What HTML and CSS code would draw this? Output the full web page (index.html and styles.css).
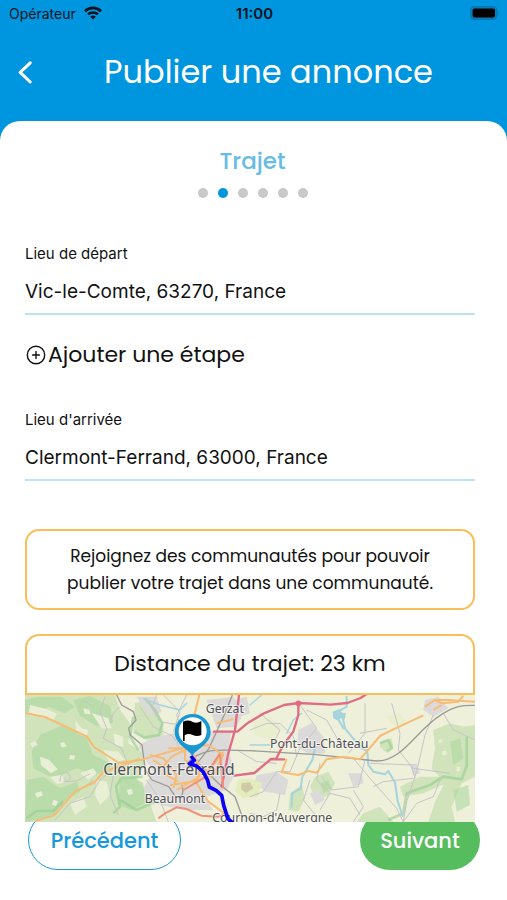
FILE: index.html
```html
<!DOCTYPE html>
<html lang="fr">
<head>
<meta charset="utf-8">
<meta name="viewport" content="width=device-width, initial-scale=1">
<title>Publier une annonce</title>
<link rel="stylesheet" href="styles.css">
</head>
<body>
<header class="top">
  <div class="status">
    <div class="carrier">
      <span>Opérateur</span>
      <svg class="wifi" viewBox="0 0 18 14" aria-hidden="true">
        <path d="M1 5.2a11.5 11.5 0 0 1 16 0" fill="none" stroke="#06121c" stroke-width="2.7"/>
        <path d="M4 8.4a7.2 7.2 0 0 1 10 0" fill="none" stroke="#06121c" stroke-width="2.5"/>
        <path d="M9 13.6 6.2 10.8a4 4 0 0 1 5.6 0Z" fill="#06121c"/>
      </svg>
    </div>
    <span class="clock">11:00</span>
    <svg class="battery" viewBox="0 0 30 14" aria-hidden="true">
      <rect x=".8" y=".8" width="26" height="12.4" rx="3.6" fill="#0580bd" stroke="#0877ae" stroke-width="1.4"/>
      <rect x="2.6" y="2.6" width="22.4" height="9" rx="2" fill="#000"/>
      <path d="M28.2 4.8q1.6 2.2 0 4.4Z" fill="#0877ae"/>
    </svg>
  </div>
  <div class="titlebar">
    <button class="back" type="button" aria-label="Retour">
      <svg viewBox="0 0 16 24" aria-hidden="true"><path d="M13.2 2.8 3.2 12.4 13.2 22" fill="none" stroke="#fff" stroke-width="3" stroke-linecap="round" stroke-linejoin="round"/></svg>
    </button>
    <h1>Publier une annonce</h1>
  </div>
</header>
<main class="sheet">
  <h2>Trajet</h2>
  <ol class="steps" aria-label="Étapes">
    <li></li><li class="current"></li><li></li><li></li><li></li><li></li>
  </ol>
  <form class="form">
    <div class="field">
      <label for="from">Lieu de départ</label>
      <input id="from" type="text" value="Vic-le-Comte, 63270, France">
    </div>
    <button class="add" type="button">
      <svg viewBox="0 0 20 20" aria-hidden="true"><circle cx="10" cy="10" r="8.7"/><path d="M10 6.5v7M6.500 10h7"/></svg>
      <span>Ajouter une étape</span>
    </button>
    <div class="field">
      <label for="to">Lieu d'arrivée</label>
      <input id="to" type="text" value="Clermont-Ferrand, 63000, France">
    </div>
    <p class="notice">Rejoignez des communautés pour pouvoir publier votre trajet dans une communauté.</p>
    <section class="route">
      <p class="distance">Distance du trajet: 23 km</p>
      <svg class="map" viewBox="15 45 1350 381" preserveAspectRatio="xMidYMid slice" role="img" aria-label="Carte du trajet">
        <rect x="15" y="45" width="1350" height="381" fill="#eef0da"/>
        <!-- woodland west of the city -->
        <g fill="#d0e3ba">
          <path d="M15 45H285L300 90 330 130 325 190 365 215 375 250 350 300 380 330 400 400 410 426H15Z"/>
          <path d="M345 70l40-10 45 70 0 40-50 10-40-30z"/>
          <path d="M1240 150l50-20 40 10 35-5V290l-40 20-30 70 10 46h-80l20-60 30-60-40-40 10-60z"/>
          <path d="M885 290l40-15 20 35-20 40-40 0-15-30zM1080 185l35-10 5 30-25 10-15-15zM810 340l35-25 10 40-20 40-30-5z"/>
          <path d="M1030 400l50-20 40 46H1010zM1140 320l60-30 60 0 40-30 0 40-90 40-60 10z"/>
        </g>
        <g fill="#add8a2" opacity=".6">
          <path d="M15 60l40-10 70 0 40 30-30 20-50-20-40 20-30-5z"/>
          <path d="M60 165l70-30 70 40 20 50 60 30-50 30-60-20-70 30-60-30-5-50z"/>
          <path d="M20 300l50-10 50 35 50-20 10 30-50 30-30 45-85 16z"/>
          <path d="M160 60l50-12 60 30 10 50-50 10-50-30z"/>
          <path d="M300 300l40-10 30 20 5 60-40 20-40-15z"/>
          <path d="M900 310l25-10 10 25-25 15zM1290 185l30-10 10 60-30 20zM1300 330l45-15 5 60-40 20z"/>
        </g>
        <g fill="#e9efd5">
          <path d="M30 75l50 12 30 15-10 18-45-10-30-5zM215 100l50 15 10 30-30 0zM60 230l28 10 25 28-20 12-30-25zM230 300l30 5 10 40-30 30-15-30zM150 370l40-20 10 30-35 25zM280 160l30 10 0 30-25-5zM250 210l45 5 20 25-45 10z"/>
          <path d="M90 290l35-5 15 20-30 8zM165 120l20 25 20 5-5 20-30-10zM180 280l40-15 10 15-25 20z"/>
          <path d="M120 190l12-4 8 12-14 6zM150 225l16 2-4 12-14-2zM45 340l18-6 6 12-18 8zM100 360l14 4-6 14-12-4zM190 85l18 4 4 14-18-2zM30 190l14-6 10 10-16 8zM320 330l14-4 6 14-14 6zM1265 215l12-4 4 12-12 4zM1310 260l10 0 0 12-10 2zM1255 180l10-3 3 10-10 2z"/>
        </g>
        <!-- built-up areas -->
        <g fill="#dcdad9">
          <path d="M350 50l60 0 15 45-30 15-25-25zM405 170l60-10 60 20 60-30 50 0-10 60 20 70-25 50-60 20-30 30-70-20-60 5-30-40 30-50-20-30-25-50zM560 60l80-10 30 50-20 40-60 5zM380 350l60-10 110 10 30 40-90 0-90-20z"/>
          <path d="M835 150l40-20 35 40 5 50-50 0-35-20zM710 285l60-10 35 25-10 45-60-10-30-30zM1215 60l40-10 30 35-45 25-30-20zM985 280l40 0 5 30-30 10zM870 340l30-10 15 30-30 15zM640 60l40-10 10 50-30 10zM1170 255l20-5 10 30-20 5z"/>
        </g>
        <g fill="#e4ebbd"><path d="M655 300l35-5 35 15-10 40-45 5-25-20z"/><path d="M700 125l50-15 35 30-30 40-50-15zM1100 110l40-10 20 30-30 20z" opacity=".5"/></g>
        <path d="M665 310l25-3 10 18-22 14-15-12z" fill="#cfc9a5"/>
        <!-- wood outlines -->
        <g fill="none" stroke="#94cd91" stroke-width="8" opacity=".6" stroke-linejoin="round">
          <path d="M375 55l30 35 22 40-10 35-45 8-30-18M280 400l20-20-12-60 15-25 65-5M300 360l50 30 45-20 35-10M340 110l-10 60 25 40M20 415l30-22 50 0 30-30"/>
          <path d="M1105 420l45-20 10-60 70-25 40-25 55 8 15-40V170M1080 190l25-10 10 25-15 10"/>
        </g>
        <!-- minor roads -->
        <g fill="none" stroke="#c6c4c8" stroke-width="3" stroke-linejoin="round">
          <path d="M105 420l45-50 60-20 30-50 35-30M255 50l-15 45 20 50-10 30 55 30 20 50-45 30-10 60 25 60M410 45l-15 40 25 40 60 10 30-30M360 80l40 60 60 30 30 50M430 45l50 50-20 60M500 45l-30 60 15 40M380 300l40 60 25 66M270 130l10-30 20-20M120 305c0-35 30-35 30-12 0 15-20 12-18 0M130 305l40-2 40-22M180 330l40-30M190 60l30 20"/>
          <path d="M690 150l50-20 40 0 40 40 10 60M720 100l60 50-30 60M840 75l50 70-50 60-30 70-40 0-40 60-40 15M860 90l60 30 40 70 80 20M1035 70v90l-50 60M1115 70l25 90-5 50 40 50 10 35M1240 105l-25 60-25 110-30 90-10 61M1035 240l-20 80-80 10-30-40M1000 235l50 60 80 90 20 41M1020 160l80-15M1060 320l30-15 90-10M870 300l-20 60 40 50M1180 265l110 15M1260 300l-20 50-50 20-40 56M1270 100l30 50 65 30M930 340l60 15 30 50M1050 250l130 5M650 210l60 35 60 5M780 340l-10 50-40 20M900 250l-10 50 40 40-30 50M1000 330l30 50-30 46M690 400l60 15"/>
        </g>
        <!-- rivers -->
        <g fill="none" stroke="#a5d3de" stroke-width="6" stroke-linejoin="round" stroke-linecap="round">
          <path d="M965 100l10 45 20 25 22 25 25 20 3 40 15 20 35 8 10-10 20 35 8 55 15 45"/>
          <path d="M945 100l35-20 0-30M945 100l25 45M885 205l-8 35-30 50-5 35-25 15-3 40"/>
          <path d="M370 55l50 20 60 15 20-20M690 75l35-30M690 195h60M800 160l20-40 25-20" stroke-width="4"/>
        </g>
        <path d="M938 95l20-8 8 12 12 0-4 20-12-4-6 8-16-8z" fill="#a5d3de"/>
        <!-- railways -->
        <g fill="none" stroke="#9c9a96" stroke-width="4" stroke-linejoin="round">
          <path d="M290 45l15 30 35 20 8 25-22 25 5 20 35 30 10 75 20 30 50 20 20 30q30 8 20-35"/>
          <path d="M637 45l-20 50-50 110-40 50M500 250c50-50 100-40 190-38l200 12 180 19c80 0 120-95 195-140 40-25 60-28 100-27"/>
          <path d="M535 250l60 60 50 40 20 55 40 21"/>
        </g>
        <!-- secondary roads -->
        <g fill="none" stroke="#f7bb74" stroke-width="6" stroke-linejoin="round">
          <path d="M15 99l60 12 125 58 22 32 75 48 70-10 40-12 90-25M45 424l60-20 60-70 60-28 25-30 70-25 40-15"/>
          <path d="M538 45l-15 60M590 130l50-12M495 180v60l30 20M400 240l30 20 25-30 50-25 60-10 45 30-30 60-60 20-70 10M390 225l40 10 40 50-10 40M470 330l60-35 50-40 30-40M430 280l45 25M445 205l65 0 30 55-10 50 35 55 55 40"/>
          <path d="M800 237l-15 40 50 8 30-12 25 5 30-40 50-8 50 8 60-70 40-20 90-42M1215 80l30-20 20 10 50-5 15-18M1245 60l40 0 80 5M1240 90l25-15"/>
        </g>
        <!-- motorways -->
        <g fill="none" stroke="#e06c84" stroke-width="7" stroke-linejoin="round" stroke-linecap="round">
          <path d="M657 45l-12 105-20 70-20 100M582 155h70l30-25 50-30 60-25 45-6 95 5 50-5 40-15 15-10M835 70l0 35-15 50-30 40-22 42-15 0-50 42-60 8M750 238h42"/>
          <circle cx="835" cy="70" r="5"/>
        </g>
        <g fill="none" stroke="#ee9178" stroke-width="6"><path d="M415 415l20-15 35-18 30 5 45 20 50 3 20-8M490 330l60-35 50-75M600 225l10 100"/></g>
        <g class="place">
          <text x="557" y="98" font-size="37">Gerzat</text>
          <text x="250" y="284" font-size="47">Clermont-Ferrand</text>
          <text x="374" y="370" font-size="37">Beaumont</text>
          <text x="750" y="205" font-size="37">Pont-du-Château</text>
          <text x="577" y="426" font-size="37">Cournon-d'Auvergne</text>
        </g>
        <path d="M513 228l10 13-15 10 22 7 20 18 13 25 5 20 20 10 17 15 6 30 8 25 5 15 15 14" fill="none" stroke="#0b00f5" stroke-width="11" stroke-linejoin="round"/>
        <path d="M517 228c-8-18-53-35-53-72a54 54 0 0 1 108 0c0 37-47 54-55 72Z" fill="#1997d3"/>
        <circle cx="518" cy="154" r="42" fill="#fff"/>
        <path d="M489 125q15-7 28 0t27-2v42q-13 6-26 0t-24 1v17h-5Z" fill="#000"/>
      </svg>
    </section>
  </form>
  <nav class="actions">
    <button class="prev" type="button">Précédent</button>
    <button class="next" type="button">Suivant</button>
  </nav>
</main>
</body>
</html>
```

FILE: styles.css
```css
* { box-sizing: border-box; }
body {
  margin: 0;
  min-height: 100vh;
  background: #0096df;
  color: #111;
  font-family: Poppins, Inter, sans-serif;
  display: flex;
  flex-direction: column;
}
button { font: inherit; border: 0; background: none; padding: 0; color: inherit; cursor: pointer; }
h1, h2, p { margin: 0; font-weight: 400; }
svg { display: block; }

.status {
  display: grid;
  grid-template-columns: 1fr auto 1fr;
  align-items: center;
  height: 26px;
  padding: 0 7px 0 9px;
  font-family: Inter, sans-serif;
  font-size: 14px;
  color: #06121c;
}
.carrier { display: flex; align-items: center; gap: 8px; }
.wifi { width: 18px; height: 14px; }
.clock { font-size: 15px; font-weight: 600; }
.battery { width: 30px; height: 14px; justify-self: end; }

.titlebar {
  display: grid;
  grid-template-columns: 48px 1fr 18px;
  align-items: center;
  height: 92px;
  margin-bottom: 3px;
}
.back { height: 48px; padding-left: 17px; }
.back svg { width: 16px; height: 24px; }
h1 { font-size: 32px; line-height: 40px; color: #fff; text-align: center; }

.sheet {
  flex: 1;
  background: #fff;
  border-radius: 20px 20px 0 0;
  padding: 28px 27px 28px 25px;
}
h2 { font-size: 23px; line-height: 24px; font-weight: 500; color: #68bbe6; text-align: center; }
.steps {
  display: flex;
  justify-content: center;
  gap: 10px;
  list-style: none;
  margin: 15px 0 0;
  padding: 0;
}
.steps li { width: 10px; height: 10px; border-radius: 50%; background: #c9c9c9; }
.steps .current { background: #0096df; }

.form { margin: 46px 5px 0 0; }
.field { font-family: Inter, sans-serif; }
.field label { display: block; font-size: 15px; line-height: 20px; }
.field input {
  display: block;
  width: 100%;
  height: 51px;
  border: 0;
  border-bottom: 2px solid #bde1f5;
  padding: 5px 0 0;
  background: none;
  font: inherit;
  font-size: 19px;
  color: #111;
  outline: none;
}
.add { display: flex; align-items: center; gap: 2px; margin: 25px 0 40px 1px; font-size: 22px; line-height: 30px; }
.add svg { width: 20px; height: 20px; fill: none; stroke: #111; stroke-width: 1.4; stroke-linecap: round; }

.notice {
  margin-top: 48px;
  padding: 12px 36px 11px;
  border: 2px solid #fabd5a;
  border-radius: 14px;
  font-size: 17px;
  line-height: 27px;
  text-align: center;
}
.route { position: relative; z-index: 1; margin-top: 24px; }
.distance {
  padding: 13px 0 14px;
  border: 2px solid #fabd5a;
  border-radius: 14px 14px 0 0;
  font-size: 22px;
  line-height: 30px;
  text-align: center;
}
.map { width: 100%; height: 127px; }
.place text {
  font-family: "Noto Sans", sans-serif;
  fill: #505050;
  stroke: #fff;
  stroke-opacity: .6;
  stroke-width: 6px;
  paint-order: stroke;
}

.actions { display: flex; justify-content: space-between; margin: -12px 0 0 3px; }
.actions button { height: 60px; border-radius: 30px; font-size: 21px; font-weight: 500; padding: 0 20px; }
.actions .prev { min-width: 153px; border: 1px solid #1698dc; color: #1698dc; }
.actions .prev:hover { background: #eef8fd; }
.actions .next { min-width: 120px; padding: 0 16px; background: #56bd5e; color: #fff; }
```
